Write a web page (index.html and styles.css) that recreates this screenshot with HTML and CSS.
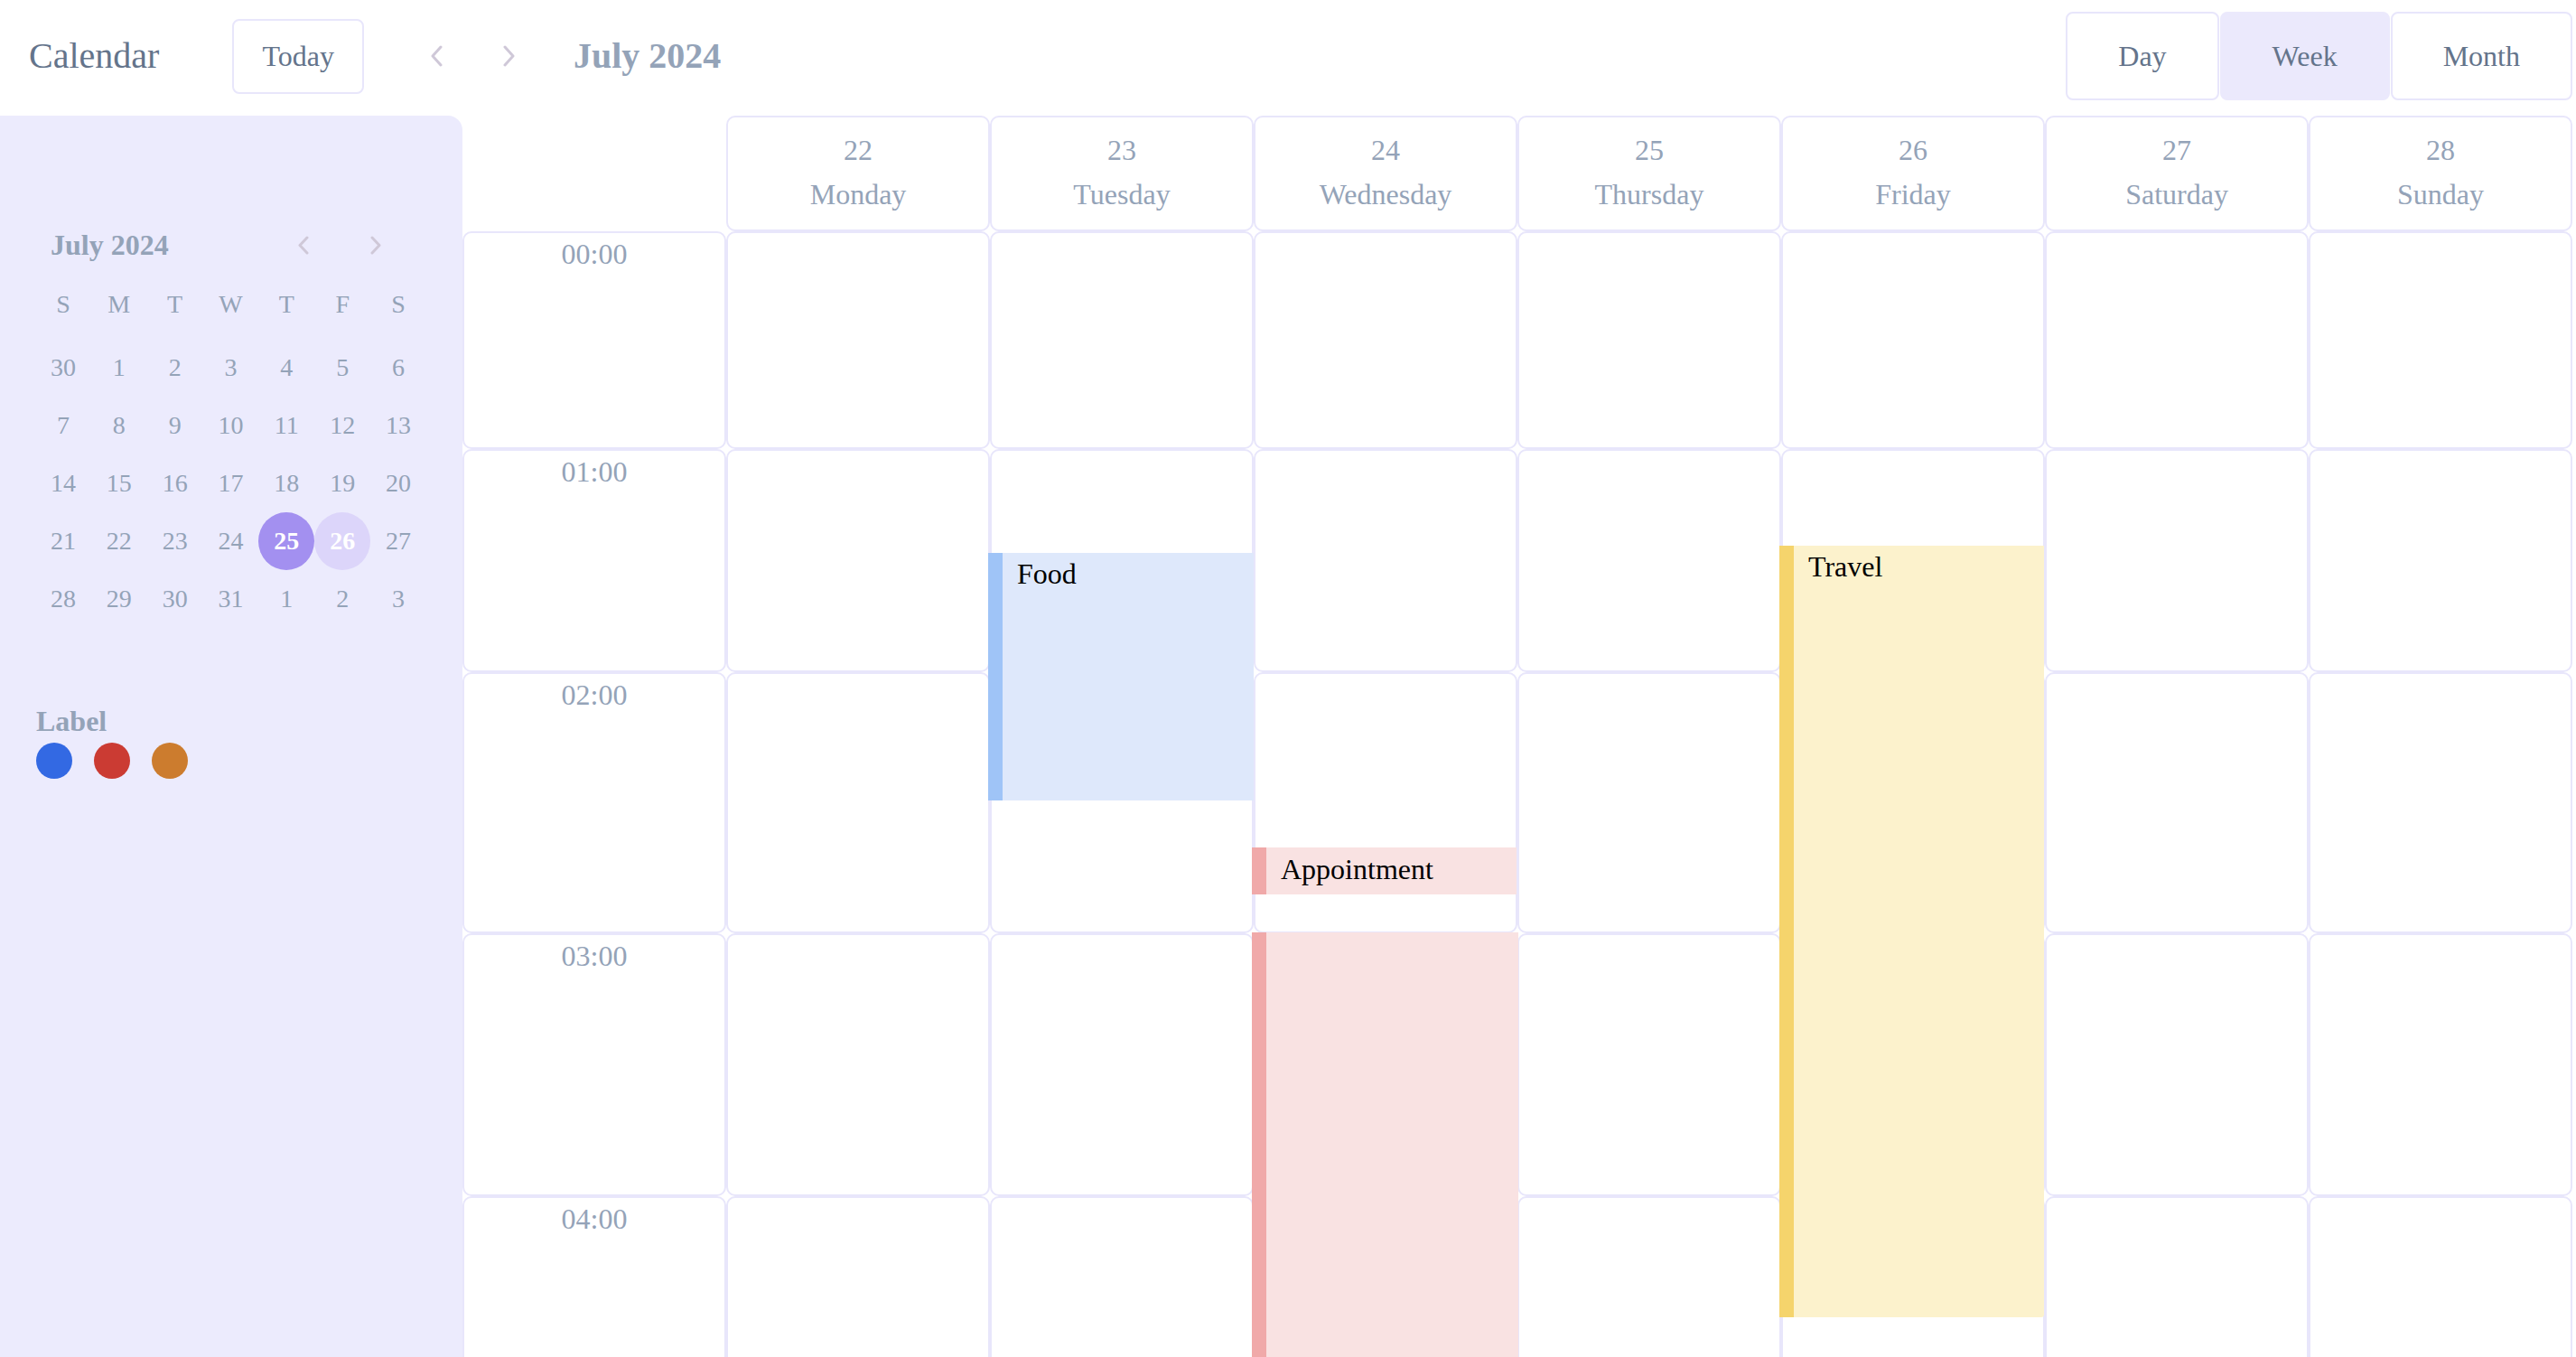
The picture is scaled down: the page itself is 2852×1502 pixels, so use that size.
FILE: index.html
```html
<!DOCTYPE html>
<html lang="en">
<head>
<meta charset="utf-8">
<title>Calendar</title>
<link rel="stylesheet" href="styles.css">
</head>
<body>
<header class="topbar">
  <div class="brand">Calendar</div>
  <button class="btn-today">Today</button>
  <div class="nav">
    <svg class="chev" viewBox="0 0 16 24"><path d="M13 2 L4 12 L13 22" fill="none" stroke="#cfc8d8" stroke-width="3" stroke-linecap="round" stroke-linejoin="round"/></svg>
    <svg class="chev" viewBox="0 0 16 24"><path d="M3 2 L12 12 L3 22" fill="none" stroke="#cfc8d8" stroke-width="3" stroke-linecap="round" stroke-linejoin="round"/></svg>
  </div>
  <div class="title">July 2024</div>
  <div class="views">
    <button class="view">Day</button>
    <button class="view active">Week</button>
    <button class="view">Month</button>
  </div>
</header>

<div class="main">
  <aside class="sidebar">
    <div class="mini-head">
      <div class="mini-title">July 2024</div>
      <div class="mini-nav">
        <svg class="mini-chev" viewBox="0 0 15 21"><path d="M12 2 L4 10.5 L12 19" fill="none" stroke="#cfc8d8" stroke-width="3" stroke-linecap="round" stroke-linejoin="round"/></svg>
        <svg class="mini-chev" viewBox="0 0 15 21"><path d="M3 2 L11 10.5 L3 19" fill="none" stroke="#cfc8d8" stroke-width="3" stroke-linecap="round" stroke-linejoin="round"/></svg>
      </div>
    </div>
    <div class="mini-grid mini-week">
      <span>S</span><span>M</span><span>T</span><span>W</span><span>T</span><span>F</span><span>S</span>
    </div>
    <div class="mini-grid mini-days">
      <span>30</span><span>1</span><span>2</span><span>3</span><span>4</span><span>5</span><span>6</span>
      <span>7</span><span>8</span><span>9</span><span>10</span><span>11</span><span>12</span><span>13</span>
      <span>14</span><span>15</span><span>16</span><span>17</span><span>18</span><span>19</span><span>20</span>
      <span>21</span><span>22</span><span>23</span><span>24</span><span class="sel">25</span><span class="sel2">26</span><span>27</span>
      <span>28</span><span>29</span><span>30</span><span>31</span><span>1</span><span>2</span><span>3</span>
    </div>
    <div class="labels">
      <div class="labels-title">Label</div>
      <div class="dots">
        <span class="dot dot-blue"></span>
        <span class="dot dot-red"></span>
        <span class="dot dot-orange"></span>
      </div>
    </div>
  </aside>

  <section class="week">
    <div class="corner"></div>
    <div class="cell dayhead"><span>22</span><span>Monday</span></div>
    <div class="cell dayhead"><span>23</span><span>Tuesday</span></div>
    <div class="cell dayhead"><span>24</span><span>Wednesday</span></div>
    <div class="cell dayhead"><span>25</span><span>Thursday</span></div>
    <div class="cell dayhead"><span>26</span><span>Friday</span></div>
    <div class="cell dayhead"><span>27</span><span>Saturday</span></div>
    <div class="cell dayhead"><span>28</span><span>Sunday</span></div>

    <div class="cell time">00:00</div>
    <div class="cell"></div><div class="cell"></div><div class="cell"></div><div class="cell"></div><div class="cell"></div><div class="cell"></div><div class="cell"></div>

    <div class="cell time">01:00</div>
    <div class="cell"></div><div class="cell"></div><div class="cell"></div><div class="cell"></div><div class="cell"></div><div class="cell"></div><div class="cell"></div>

    <div class="cell time">02:00</div>
    <div class="cell"></div><div class="cell"></div><div class="cell"></div><div class="cell"></div><div class="cell"></div><div class="cell"></div><div class="cell"></div>

    <div class="cell time">03:00</div>
    <div class="cell"></div><div class="cell"></div><div class="cell"></div><div class="cell"></div><div class="cell"></div><div class="cell"></div><div class="cell"></div>

    <div class="cell time">04:00</div>
    <div class="cell"></div><div class="cell"></div><div class="cell"></div><div class="cell"></div><div class="cell"></div><div class="cell"></div><div class="cell"></div>

    <div class="event ev-blue ev-food">Food</div>
    <div class="event ev-red ev-appt">Appointment</div>
    <div class="event ev-red ev-wed"></div>
    <div class="event ev-yellow ev-travel">Travel</div>
  </section>
</div>
</body>
</html>
```

FILE: styles.css
```css
* {
  box-sizing: border-box;
}

html,
body {
  margin: 0;
  padding: 0;
  height: 100%;
  overflow: hidden;
}

body {
  font-family: "Liberation Serif", "Times New Roman", serif;
  background: #ffffff;
  color: #000000;
}

button {
  font-family: inherit;
  background: #ffffff;
  cursor: pointer;
  margin: 0;
}

/* ---------- Top bar ---------- */
.topbar {
  height: 124px;
  margin-bottom: 4px;
  display: flex;
  align-items: center;
  padding: 0 4px 0 32px;
}

.brand {
  font-size: 40px;
  line-height: 46px;
  color: #64748b;
}

.btn-today {
  margin-left: 81px;
  font-size: 32px;
  line-height: 37px;
  padding: 21px 31px;
  border: 2px solid #e8e6fb;
  border-radius: 8px;
  color: #64748b;
}

.nav {
  display: flex;
  gap: 65px;
  margin-left: 72px;
}

.chev {
  width: 16px;
  height: 24px;
  display: block;
}

.title {
  margin-left: 63px;
  font-size: 40px;
  line-height: 46px;
  font-weight: bold;
  color: #94a3b8;
}

.views {
  margin-left: auto;
  display: flex;
  gap: 1px;
}

.view {
  padding: 28px 56px;
  font-size: 32px;
  line-height: 38px;
  border: 2px solid #e8e6fb;
  border-radius: 8px;
  color: #64748b;
}

.view.active {
  background: #ebe9fc;
  border-color: #ebe9fc;
}

/* ---------- Main ---------- */
.main {
  display: flex;
  align-items: stretch;
}

.sidebar {
  width: 512px;
  flex: none;
  background: #ecebfd;
  border-top-right-radius: 16px;
  padding: 125px 40px 0 39px;
}

.mini-head {
  display: flex;
  align-items: center;
  height: 36px;
  padding-left: 17px;
  margin-bottom: 16px;
}

.mini-title {
  font-size: 32px;
  line-height: 36px;
  font-weight: bold;
  color: #94a3b8;
}

.mini-nav {
  margin-left: auto;
  margin-right: 48px;
  display: flex;
  gap: 66px;
}

.mini-chev {
  width: 15px;
  height: 21px;
  display: block;
}

.mini-grid {
  display: grid;
  grid-template-columns: repeat(7, 1fr);
  grid-auto-rows: 64px;
  font-size: 28px;
  line-height: 64px;
  text-align: center;
  color: #94a3b8;
}

.mini-week {
  margin-bottom: 6px;
}

.mini-days .sel {
  background: #a390f0;
  color: #ffffff;
  font-weight: bold;
  border-radius: 50%;
}

.mini-days .sel2 {
  background: #dcd5fa;
  color: #ffffff;
  font-weight: bold;
  border-radius: 50%;
}

.labels {
  margin-top: 85px;
  padding-left: 1px;
}

.labels-title {
  font-size: 32px;
  line-height: 36px;
  font-weight: bold;
  color: #94a3b8;
}

.dots {
  display: flex;
  gap: 24px;
  margin-top: 6px;
}

.dot {
  width: 40px;
  height: 40px;
  border-radius: 50%;
  display: block;
}

.dot-blue {
  background: #3369e3;
}

.dot-red {
  background: #cb3b33;
}

.dot-orange {
  background: #cc7c2e;
}

/* ---------- Week grid ---------- */
.week {
  flex: 1;
  margin-right: 4px;
  position: relative;
  display: grid;
  grid-template-columns: repeat(8, 1fr);
  grid-template-rows: 128px 241px 247px 289px 291px 291px;
}

.cell {
  border: 2px solid #e8e6fb;
  border-radius: 10px;
  background: #ffffff;
}

.dayhead {
  display: flex;
  flex-direction: column;
  justify-content: center;
  align-items: center;
  font-size: 32px;
  line-height: 49px;
  padding-bottom: 2px;
  color: #94a3b8;
}

.time {
  text-align: center;
  font-size: 32px;
  line-height: 46px;
  color: #94a3b8;
}

/* ---------- Events ---------- */
.event {
  position: absolute;
  font-size: 32px;
  line-height: 36px;
  padding: 5px 16px;
  color: #000000;
}

.ev-blue {
  background: #dee8fb;
  border-left: 16px solid #9fc4f7;
}

.ev-red {
  background: #f9e2e2;
  border-left: 16px solid #f0a9a9;
}

.ev-yellow {
  background: #fcf2cc;
  border-left: 16px solid #f5d46c;
  border-radius: 0 0 3px 0;
}

.ev-food {
  left: 582px;
  top: 484px;
  width: 294px;
  height: 274px;
}

.ev-appt {
  left: 874px;
  top: 810px;
  width: 293px;
  height: 52px;
  padding-top: 6px;
}

.ev-wed {
  left: 874px;
  top: 904px;
  width: 295px;
  height: 580px;
}

.ev-travel {
  left: 1458px;
  top: 476px;
  width: 293px;
  height: 854px;
}
```
